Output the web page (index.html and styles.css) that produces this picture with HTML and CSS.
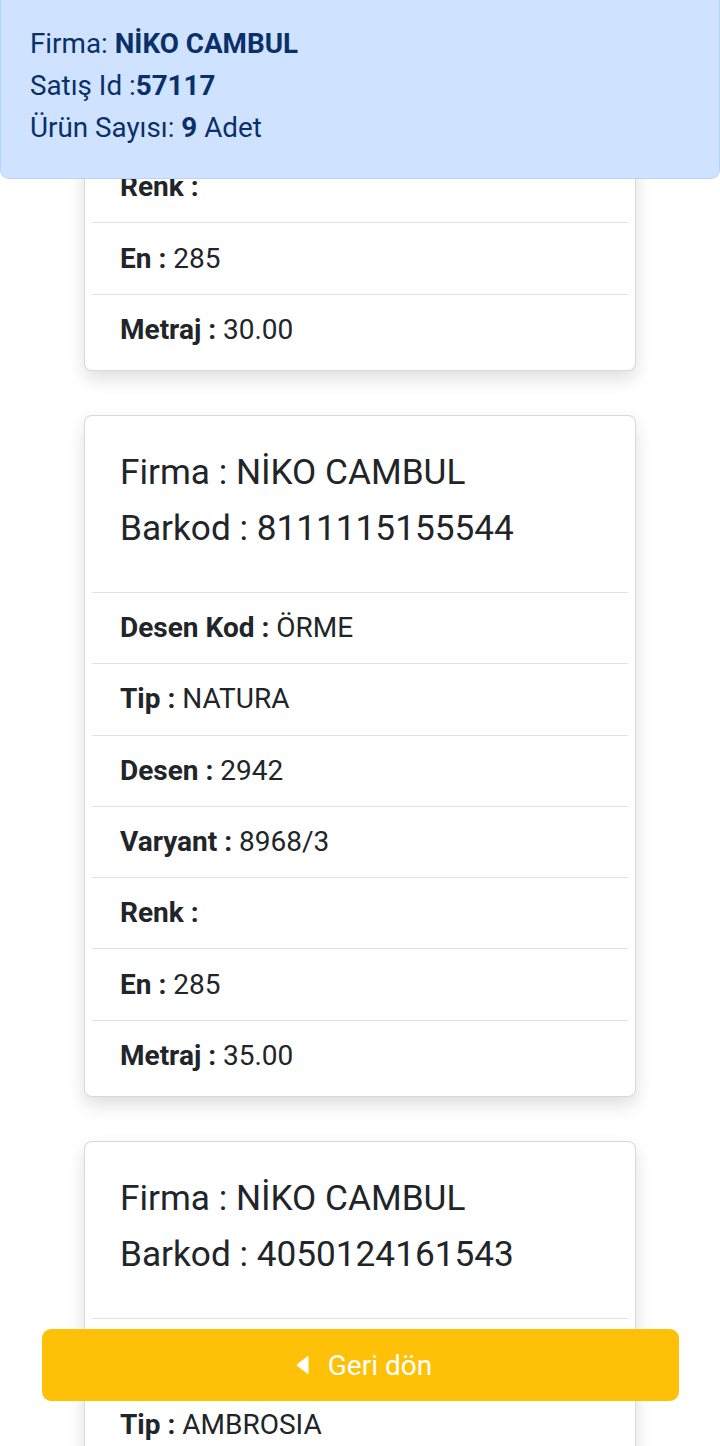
FILE: index.html
```html
<!DOCTYPE html>
<html lang="tr">
<head>
<meta charset="utf-8">
<title>Satış Detay</title>
<link rel="stylesheet" href="styles.css">
</head>
<body>
<div class="summary">
  <div class="sum-line">Firma: <b>NİKO CAMBUL</b></div>
  <div class="sum-line">Satış Id :<b>57117</b></div>
  <div class="sum-line">Ürün Sayısı: <b>9</b> Adet</div>
</div>

<main class="list">
  <section class="card">
    <div class="card-head">
      <div class="title">Firma : NİKO CAMBUL</div>
      <div class="title">Barkod : 8111115155544</div>
    </div>
    <ul class="rows">
      <li class="row"><b>Desen Kod :</b> ÖRME</li>
      <li class="row"><b>Tip :</b> NATURA</li>
      <li class="row"><b>Desen :</b> 2942</li>
      <li class="row"><b>Varyant :</b> 8968/3</li>
      <li class="row"><b>Renk :</b></li>
      <li class="row"><b>En :</b> 285</li>
      <li class="row"><b>Metraj :</b> 30.00</li>
    </ul>
  </section>

  <section class="card">
    <div class="card-head">
      <div class="title">Firma : NİKO CAMBUL</div>
      <div class="title">Barkod : 8111115155544</div>
    </div>
    <ul class="rows">
      <li class="row"><b>Desen Kod :</b> ÖRME</li>
      <li class="row"><b>Tip :</b> NATURA</li>
      <li class="row"><b>Desen :</b> 2942</li>
      <li class="row"><b>Varyant :</b> 8968/3</li>
      <li class="row"><b>Renk :</b></li>
      <li class="row"><b>En :</b> 285</li>
      <li class="row"><b>Metraj :</b> 35.00</li>
    </ul>
  </section>

  <section class="card">
    <div class="card-head">
      <div class="title">Firma : NİKO CAMBUL</div>
      <div class="title">Barkod : 4050124161543</div>
    </div>
    <ul class="rows">
      <li class="row"><b>Desen Kod :</b> ÖRME</li>
      <li class="row"><b>Tip :</b> AMBROSIA</li>
      <li class="row"><b>Desen :</b> 2942</li>
      <li class="row"><b>Varyant :</b> 8968/3</li>
    </ul>
  </section>
</main>

<button class="back-btn" type="button">
  <svg class="caret" width="14" height="22" viewBox="0 0 14 22" aria-hidden="true">
    <path d="M12.5 2.2 L2.3 10.1 Q1.2 11 2.3 11.9 L12.5 19.8 Q13.5 20.5 13.5 19.3 L13.5 2.7 Q13.5 1.5 12.5 2.2 Z" fill="#ffffff"/>
  </svg>
  <span>Geri dön</span>
</button>
</body>
</html>
```

FILE: styles.css
```css
html, body {
  margin: 0;
  padding: 0;
}
body {
  width: 720px;
  height: 1446px;
  overflow: hidden;
  background: #ffffff;
  font-family: Roboto, "Noto Sans", "Liberation Sans", sans-serif;
  color: #212529;
}

.summary {
  position: fixed;
  top: 0;
  left: 0;
  right: 0;
  z-index: 10;
  box-sizing: border-box;
  height: 179px;
  padding: 23px 29px 0;
  background: #cfe2ff;
  border: 1px solid #b6d4fe;
  border-top: none;
  border-radius: 0 0 9px 9px;
  color: #0a3069;
  font-size: 27.8px;
}
.sum-line {
  line-height: 42px;
  white-space: nowrap;
}
.sum-line b {
  font-weight: 700;
}

.list {
  margin: -311px auto 0;
  width: 552px;
  display: flex;
  flex-direction: column;
  gap: 44px;
  padding-bottom: 200px;
}

.card {
  box-sizing: border-box;
  background: #ffffff;
  border: 1px solid rgba(0, 0, 0, 0.15);
  border-radius: 8px;
  box-shadow: 0 8px 18px rgba(0, 0, 0, 0.13);
  padding: 0 7px 5px;
}
.card-head {
  padding: 28px 28px 36px;
}
.title {
  font-size: 35.2px;
  line-height: 56px;
  white-space: nowrap;
}

.rows {
  list-style: none;
  margin: 0;
  padding: 0;
}
.row {
  border-top: 1px solid #dee2e6;
  padding: 19.15px 28px;
  font-size: 28px;
  line-height: 32px;
  white-space: nowrap;
}
.row b {
  font-weight: 700;
}

.back-btn {
  position: fixed;
  left: 42px;
  right: 41px;
  bottom: 45px;
  height: 72px;
  z-index: 10;
  display: flex;
  align-items: center;
  justify-content: center;
  gap: 19px;
  background: #ffc107;
  border: none;
  border-radius: 9px;
  color: #ffffff;
  font-family: Roboto, "Noto Sans", "Liberation Sans", sans-serif;
  font-size: 28px;
  padding: 0 0 0 6px;
}
.caret {
  display: block;
}
```
